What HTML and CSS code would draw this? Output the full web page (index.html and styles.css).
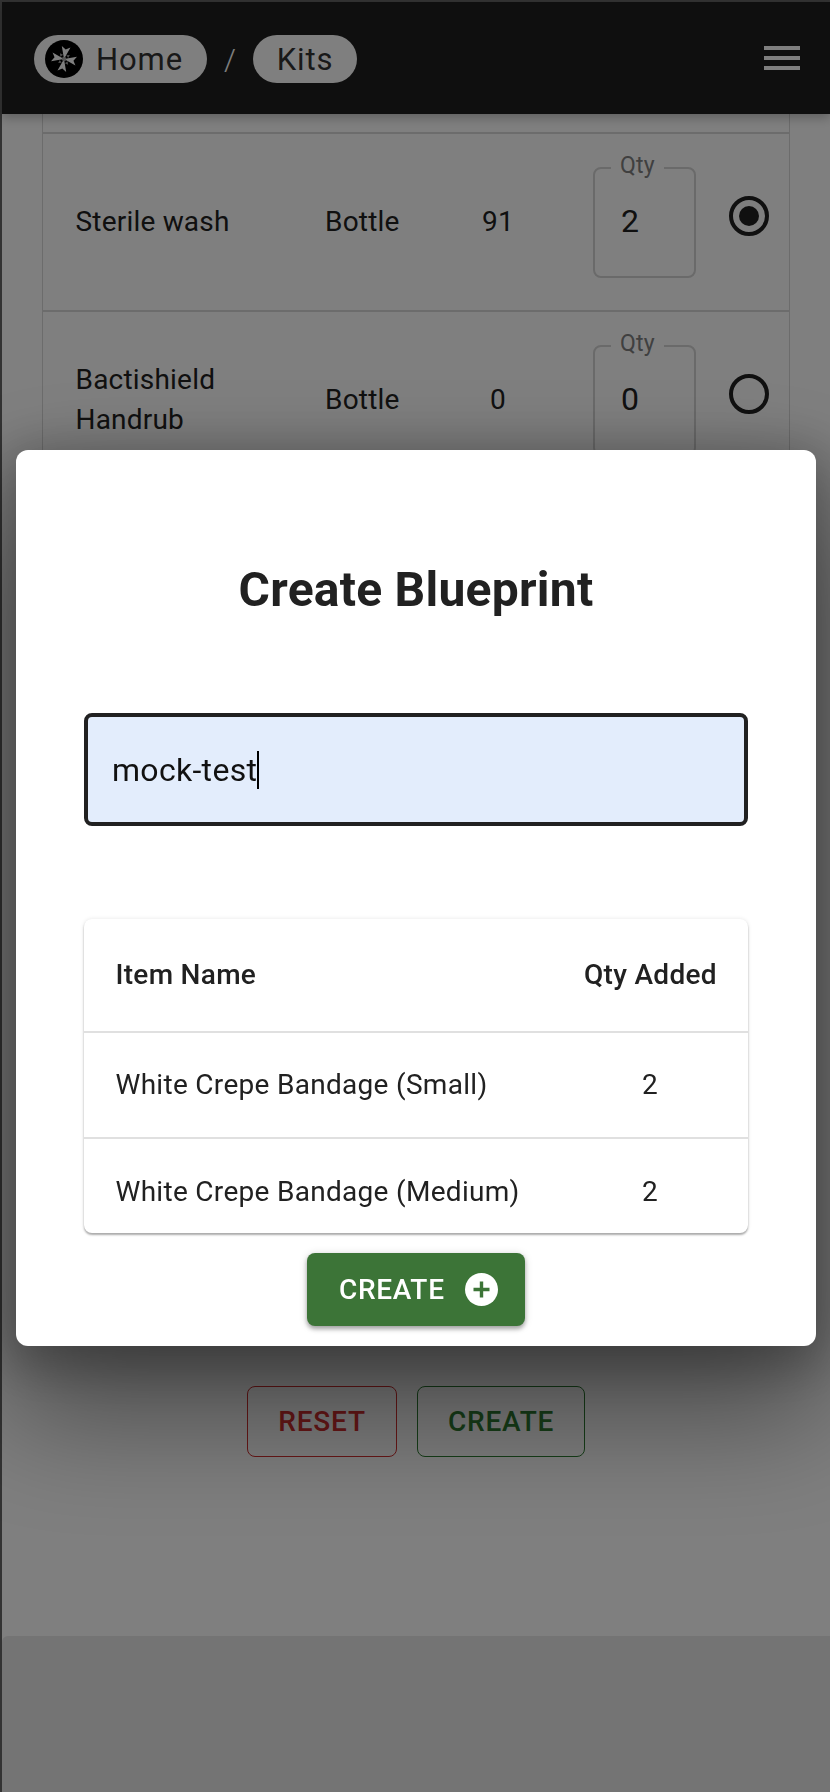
FILE: index.html
```html
<!DOCTYPE html>
<html lang="en">
<head>
<meta charset="utf-8">
<title>Create Blueprint</title>
<link rel="stylesheet" href="styles.css">
</head>
<body>
<div class="page">
  <header class="topbar">
    <nav class="crumbs">
      <span class="chip chip-home">
        <svg class="logo" viewBox="0 0 38 38" aria-hidden="true">
          <circle cx="19" cy="19" r="19" fill="#000"/>
          <g transform="rotate(10 19 19)">
            <g fill="#fff">
              <path d="M19 19 L14.6 6.6 L19 9.4 L23.4 6.6 Z"/>
              <path d="M19 19 L14.6 6.6 L19 9.4 L23.4 6.6 Z" transform="rotate(90 19 19)"/>
              <path d="M19 19 L14.6 6.6 L19 9.4 L23.4 6.6 Z" transform="rotate(180 19 19)"/>
              <path d="M19 19 L14.6 6.6 L19 9.4 L23.4 6.6 Z" transform="rotate(270 19 19)"/>
            </g>
            <path d="M14 14 L17.4 15 L15 17.4 Z M24 14 L23 17.4 L20.6 15 Z M14 24 L15 20.6 L17.4 23 Z M24 24 L20.6 23 L23 20.6 Z" fill="#999"/>
            <circle cx="19" cy="19" r="2.2" fill="#aaa"/>
          </g>
        </svg>
        <span>Home</span>
      </span>
      <span class="sep">/</span>
      <span class="chip chip-kits">Kits</span>
    </nav>
    <div class="menu"><i></i><i></i><i></i></div>
  </header>

  <main class="content">
    <section class="list">
      <div class="row">
        <div class="name">Sterile wash</div>
        <div class="unit">Bottle</div>
        <div class="stock">91</div>
        <div class="qty"><span class="qty-label">Qty</span><span class="qty-value">2</span></div>
        <span class="radio radio-on"></span>
      </div>
      <div class="row">
        <div class="name">Bactishield Handrub</div>
        <div class="unit">Bottle</div>
        <div class="stock">0</div>
        <div class="qty"><span class="qty-label">Qty</span><span class="qty-value">0</span></div>
        <span class="radio"></span>
      </div>
    </section>
    <div class="actions">
      <span class="btn-outline btn-reset">RESET</span>
      <span class="btn-outline btn-create">CREATE</span>
    </div>
  </main>
  <footer class="footer"></footer>
</div>

<div class="backdrop">
  <div class="modal">
    <h2 class="modal-title">Create Blueprint</h2>
    <div class="field"><span class="field-text">mock-test</span></div>
    <div class="card">
      <div class="trow thead"><span>Item Name</span><span class="tqty">Qty Added</span></div>
      <div class="trow"><span>White Crepe Bandage (Small)</span><span class="tqty">2</span></div>
      <div class="trow tlast"><span>White Crepe Bandage (Medium)</span><span class="tqty">2</span></div>
    </div>
    <div class="modal-actions">
      <span class="btn-solid">CREATE
        <svg class="plus" viewBox="0 0 33 33" aria-hidden="true">
          <circle cx="16.5" cy="16.5" r="16.5" fill="#fff"/>
          <path d="M16.5 8.5v16M8.5 16.5h16" stroke="#3c7437" stroke-width="3.4" fill="none"/>
        </svg>
      </span>
    </div>
  </div>
</div>
</body>
</html>
```
FILE: styles.css
```css
* { box-sizing: border-box; }
html, body { margin: 0; height: 100%; }
body {
  font-family: Roboto, "Noto Sans", sans-serif;
  color: #212121;
  background: #fff;
  overflow: hidden;
}
.page {
  height: 1792px;
  display: flex;
  flex-direction: column;
  border-left: 2px solid #666;
  border-top: 2px solid #666;
}
.topbar {
  height: 112px;
  flex: none;
  background: #1e1e1e;
  display: flex;
  align-items: center;
  justify-content: space-between;
  padding: 0 30px 0 32px;
  box-shadow: 0 4px 10px rgba(0,0,0,.25);
  position: relative;
  z-index: 1;
}
.crumbs { display: flex; align-items: center; margin-top: 2px; }
.chip {
  height: 48px;
  border-radius: 24px;
  background: #fff;
  display: inline-flex;
  align-items: center;
  font-size: 31px;
  letter-spacing: .9px;
  color: #333;
}
.chip-home { width: 173px; padding-left: 11px; gap: 13px; }
.chip-kits { width: 104px; justify-content: center; }
.logo { width: 38px; height: 38px; }
.sep { color: #fff; font-size: 30px; width: 46px; text-align: center; font-weight: 300; }
.menu { display: flex; flex-direction: column; gap: 6px; }
.menu i { display: block; width: 36px; height: 4px; background: #fff; }

.content { flex: 1; }
.list {
  height: 486px;
  margin: 0 40px 0 40px;
  padding-top: 18px;
  border-left: 1px solid #d8d8d8;
  border-right: 1px solid #d8d8d8;
  overflow: hidden;
}
.row {
  height: 178px;
  border-top: 2px solid #d8d8d8;
  display: flex;
  align-items: center;
  padding-left: 32.5px;
  font-size: 28px;
  letter-spacing: .2px;
  line-height: 40px;
  color: #212121;
}
.name { width: 249.5px; padding-right: 40px; }
.unit { width: 74px; }
.stock { width: 194px; padding-left: 4px; text-align: center; }
.qty {
  width: 103px;
  height: 111px;
  border: 2px solid #d4d4d4;
  border-radius: 8px;
  position: relative;
  padding: 32px 0 0 26px;
  font-size: 32px;
  line-height: 40px;
}
.qty-label {
  position: absolute;
  top: -18px;
  left: 16px;
  padding: 0 9px;
  background: #fff;
  font-size: 23px;
  line-height: 30px;
  color: #808080;
}
.qty-value { display: block; }
.radio {
  border: 4px solid #212121;
  border-radius: 50%;
  margin: -12px 0 0 33px;
  box-sizing: content-box;
  position: relative;
  width: 32px;
  height: 32px;
  flex: none;
}
.radio-on::after {
  content: "";
  position: absolute;
  inset: 6px;
  border-radius: 50%;
  background: #212121;
}

.actions {
  display: flex;
  justify-content: center;
  gap: 20px;
  margin: 786px 0 0;
}
.btn-outline {
  height: 71px;
  display: flex;
  align-items: center;
  justify-content: center;
  border: 1px solid;
  border-radius: 8px;
  font-size: 28px;
  font-weight: 500;
  letter-spacing: .8px;
}
.btn-reset { width: 150px; color: #d32f2f; }
.btn-create { width: 168px; color: #2e7d32; }

.footer {
  height: 156px;
  flex: none;
  background: #e8e8e8;
  border-top-left-radius: 6px;
}

.backdrop {
  position: fixed;
  inset: 0;
  z-index: 2;
  background: rgba(0,0,0,.5);
  padding: 450px 14px 0 16px;
}
.modal {
  height: 896px;
  background: #fff;
  border-radius: 12px;
  padding: 112px 68px 0;
  box-shadow: 0 60px 120px 10px rgba(0,0,0,.42), 0 10px 50px 10px rgba(0,0,0,.25);
}
.modal-title {
  margin: 0;
  text-align: center;
  font-size: 48px;
  line-height: 56px;
  font-weight: 700;
  letter-spacing: .25px;
  color: #212121;
}
.field {
  margin-top: 95px;
  height: 113px;
  border: 4px solid #212121;
  border-radius: 8px;
  background: #e3edfc;
  display: flex;
  align-items: center;
  padding-left: 24px;
}
.field-text {
  font-size: 32px;
  line-height: 38px;
  letter-spacing: .3px;
  color: #111;
  border-right: 2px solid #000;
}
.card {
  margin-top: 93px;
  height: 314px;
  border-radius: 8px;
  background: #fff;
  box-shadow: 0 2px 2px rgba(0,0,0,.3), 0 0 4px rgba(0,0,0,.1);
  overflow: hidden;
}
.trow {
  height: 106px;
  flex: none;
  padding: 0 32px 2px 31.5px;
  display: flex;
  align-items: center;
  justify-content: space-between;
  font-size: 28px;
  letter-spacing: .3px;
  border-bottom: 2px solid #e0e0e0;
  color: #212121;
}
.thead { height: 114px; font-weight: 500; }
.tlast { border-bottom: 0; }
.tqty { width: 132px; text-align: center; flex: none; white-space: nowrap; }
.modal-actions { display: flex; justify-content: center; margin-top: 20px; }
.btn-solid {
  width: 218px;
  height: 73px;
  border-radius: 8px;
  background: #3c7437;
  color: #fff;
  font-size: 28px;
  font-weight: 500;
  letter-spacing: .7px;
  display: flex;
  align-items: center;
  padding-left: 32px;
  gap: 20px;
  box-shadow: 0 3px 4px rgba(0,0,0,.3), 0 1px 8px rgba(0,0,0,.15);
}
.plus { width: 33px; height: 33px; flex: none; }
```
